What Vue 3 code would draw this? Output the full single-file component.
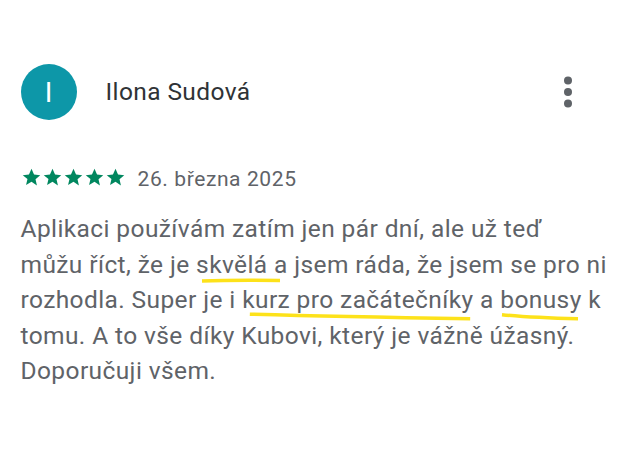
<script setup>
const stars = [0, 1, 2, 3, 4]
</script>

<template>
  <main class="review">
    <header class="head">
      <div class="avatar">I</div>
      <div class="name">Ilona Sudová</div>
      <svg class="more" viewBox="0 0 10 32" width="10" height="32" aria-hidden="true">
        <circle cx="5" cy="4.5" r="4" />
        <circle cx="5" cy="16" r="4" />
        <circle cx="5" cy="27.5" r="4" />
      </svg>
    </header>
    <div class="meta">
      <div class="stars">
        <svg v-for="s in stars" :key="s" viewBox="0 0 24 24" width="21" height="21" aria-hidden="true">
          <path d="M12 2l2.9 6.6 7.1.7-5.4 4.7 1.6 7L12 16.9l-6.2 3.7 1.6-7L2 9.3l7.1-.7z" />
        </svg>
      </div>
      <span class="date">26. března 2025</span>
    </div>
    <p class="text">Aplikaci používám zatím jen pár dní, ale už teď<br>můžu říct, že je <span class="mark">skvělá a<svg class="line line-a" viewBox="0 0 80 6" preserveAspectRatio="none"><path d="M1 3.5Q30 2.5 79 3" /></svg></span> jsem ráda, že jsem se pro ni<br>rozhodla. Super je i <span class="mark">kurz pro začátečníky<svg class="line line-b" viewBox="0 0 80 6" preserveAspectRatio="none"><path d="M1 1Q30 3 79 5" /></svg></span> a <span class="mark">bonusy<svg class="line line-c" viewBox="0 0 80 6" preserveAspectRatio="none"><path d="M1 1.5Q30 4 79 5" /></svg></span> k<br>tomu. A to vše díky Kubovi, který je vážně úžasný.<br>Doporučuji všem.</p>
  </main>
</template>

<style>
html, body { background: #fff; }
</style>

<style scoped>
.review {
  width: 640px;
  height: 460px;
  box-sizing: border-box;
  padding: 64px 0 0 20.5px;
  font-family: Roboto, "Liberation Sans", sans-serif;
  background: #fff;
  overflow: hidden;
}
.head {
  display: flex;
  align-items: center;
  height: 56px;
}
.avatar {
  width: 56px;
  height: 56px;
  border-radius: 50%;
  background: #0d97a8;
  color: #fff;
  font-size: 28px;
  display: flex;
  align-items: center;
  justify-content: center;
  flex: none;
}
.name {
  margin: -2px 0 0 29px;
  font-size: 24.5px;
  letter-spacing: 0.4px;
  color: #2f3336;
  flex: 1;
}
.more {
  margin-right: 67px;
  fill: #5f6368;
}
.meta {
  display: flex;
  align-items: center;
  margin-top: 47px;
  height: 24px;
}
.stars {
  display: flex;
  width: 105px;
  margin-top: -4px;
  fill: #01875f;
}
.date {
  margin-left: 12px;
  font-size: 21px;
  letter-spacing: 0.6px;
  color: #5f6368;
}
.text {
  margin: 20px 0 0;
  font-size: 24.5px;
  line-height: 35.5px;
  letter-spacing: 0.4px;
  color: #5f6368;
  white-space: nowrap;
}
.mark { position: relative; }
.line {
  position: absolute;
  height: 7px;
  overflow: visible;
  fill: none;
  stroke: #fde21a;
  stroke-width: 3.5px;
}
.line path { vector-effect: non-scaling-stroke; }
.line-a { left: 5px; width: 80px; bottom: -5px; }
.line-b { left: 5px; width: 226px; bottom: -6px; }
.line-c { left: 1px; width: 78px; bottom: -6px; }
</style>
